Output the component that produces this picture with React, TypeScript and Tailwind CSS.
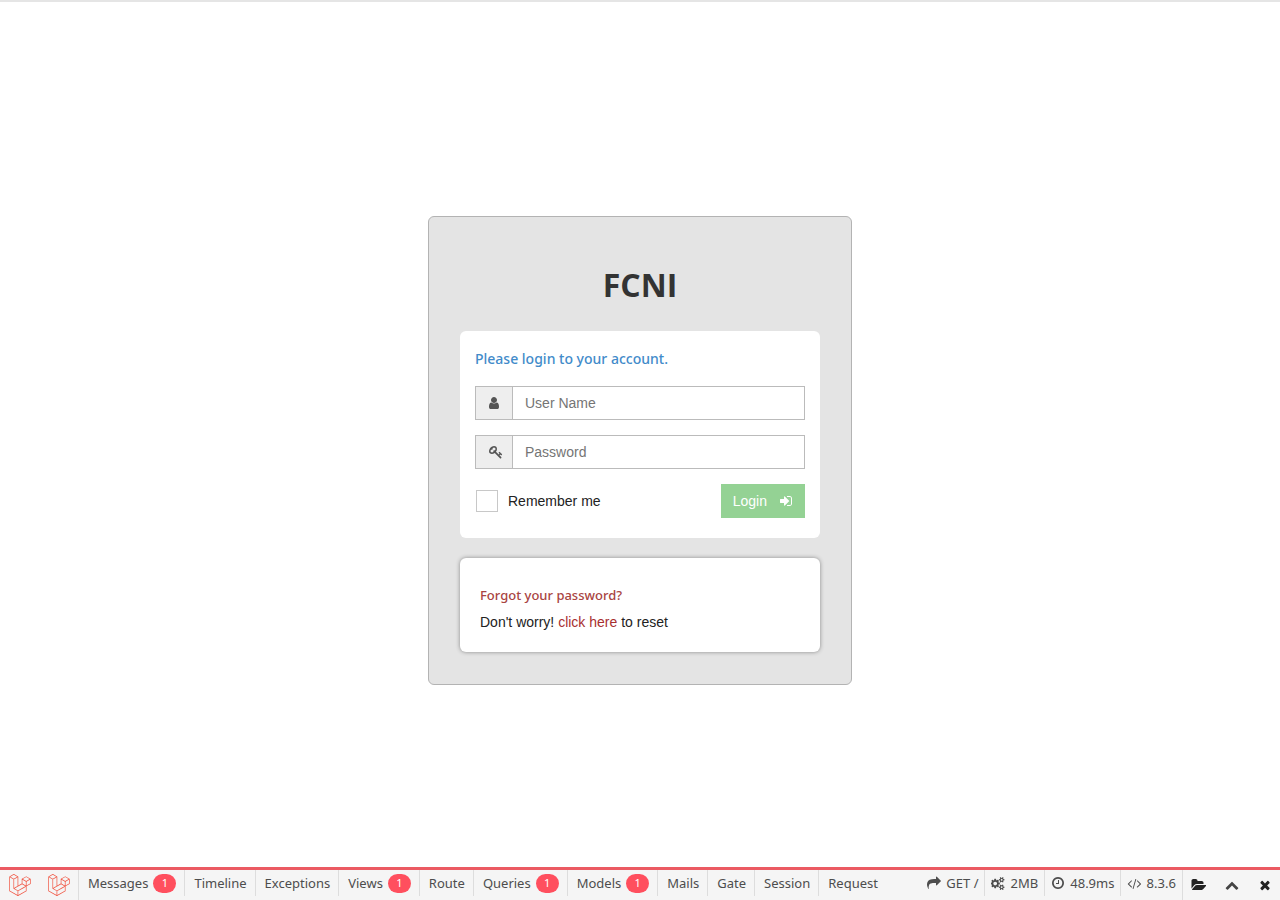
import { useState } from "react"
import type { ReactNode } from "react"
import { FaLaravel } from "react-icons/fa"

const smallCog = "v140q0 16-149 31-12 27-30 52 51 113 51 138 0 4-4 7-122 71-124 71-8 0-46-47t-52-68q-20 2-30 2t-30-2q-14 21-52 68t-46 47q-2 0-124-71-4-3-4-7 0-25 51-138-18-25-30-52-149-15-149-31v-140q0-16 149-31 13-29 30-52-51-113-51-138 0-4 4-7 4-2 35-20t59-34 30-16q8 0 46 46.5t52 67.5q20-2 30-2t30 2q51-71 92-112l6-2q4 0 124 70 4 3 4 7 0 25-51 138 17 23 30 52 149 15 149 31z";

const icons = {
    user: "M1536 1399q0 109-62.5 187t-150.5 78h-854q-88 0-150.5-78t-62.5-187q0-85 8.5-160.5t31.5-152 58.5-131 94-89 134.5-34.5q131 128 313 128t313-128q76 0 134.5 34.5t94 89 58.5 131 31.5 152 8.5 160.5zm-256-887q0 159-112.5 271.5t-271.5 112.5-271.5-112.5-112.5-271.5 112.5-271.5 271.5-112.5 271.5 112.5 112.5 271.5z",
    key: "M832 512q0-80-56-136t-136-56-136 56-56 136q0 42 19 83-41-19-83-19-80 0-136 56t-56 136 56 136 136 56 136-56 56-136q0-42-19-83 41 19 83 19 80 0 136-56t56-136zm851 704q0 17-49 66t-66 49q-9 0-28.5-16t-36.5-33-38.5-40-24.5-26l-96 96 220 220q28 28 28 68 0 42-39 81t-81 39q-40 0-68-28l-671-671q-176 131-365 131-163 0-265.5-102.5t-102.5-265.5q0-160 95-313t248-248 313-95q163 0 265.5 102.5t102.5 265.5q0 189-131 365l355 355 96-96q-3-3-26-24.5t-40-38.5-33-36.5-16-28.5q0-17 49-66t66-49q13 0 23 10 6 6 46 44.5t82 79.5 86.5 86 73 78 28.5 41z",
    signIn: "M1312 896q0 26-19 45l-544 544q-19 19-45 19t-45-19-19-45v-288h-448q-26 0-45-19t-19-45v-384q0-26 19-45t45-19h448v-288q0-26 19-45t45-19 45 19l544 544q19 19 19 45zm352-352v704q0 119-84.5 203.5t-203.5 84.5h-320q-13 0-22.5-9.5t-9.5-22.5q0-4-1-20t-.5-26.5 3-23.5 10-19.5 20.5-6.5h320q66 0 113-47t47-113v-704q0-66-47-113t-113-47h-312l-11.5-1-11.5-3-8-5.5-7-9-2-13.5q0-4-1-20t-.5-26.5 3-23.5 10-19.5 20.5-6.5h320q119 0 203.5 84.5t84.5 203.5z",
    share: "M1792 640q0 26-19 45l-512 512q-19 19-45 19t-45-19-19-45v-256h-224q-98 0-175.5 6t-154 21.5-133 42.5-105.5 69.5-80 101-48.5 138.5-17.5 181q0 55 5 123 0 6 2.5 23.5t2.5 26.5q0 15-8.5 25t-23.5 10q-16 0-28-17-7-9-13-22t-13.5-30-10.5-24q-127-285-127-451 0-199 53-333 162-403 875-403h224v-256q0-26 19-45t45-19 45 19l512 512q19 19 19 45z",
    cogs: "M832 896q0-106-75-181t-181-75-181 75-75 181 75 181 181 75 181-75 75-181zm768 512q0-52-38-90t-90-38-90 38-38 90q0 53 37.5 90.5t90.5 37.5 90.5-37.5 37.5-90.5zm0-1024q0-52-38-90t-90-38-90 38-38 90q0 53 37.5 90.5t90.5 37.5 90.5-37.5 37.5-90.5zm-384 421v185q0 10-7 19.5t-16 10.5l-155 24q-11 35-32 76 34 48 90 115 7 11 7 20 0 12-7 19-23 30-82.5 89.5t-78.5 59.5q-11 0-21-7l-115-90q-37 19-77 31-11 108-23 155-7 24-30 24h-186q-11 0-20-7.5t-10-17.5l-23-153q-34-10-75-31l-118 89q-7 7-20 7-11 0-21-8-144-133-144-160 0-9 7-19 10-14 41-53t47-61q-23-44-35-82l-152-24q-10-1-17-9.5t-7-19.5v-185q0-10 7-19.5t16-10.5l155-24q11-35 32-76-34-48-90-115-7-11-7-20 0-12 7-20 22-30 82-89t79-59q11 0 21 7l115 90q34-18 77-32 11-108 23-154 7-24 30-24h186q11 0 20 7.5t10 17.5l23 153q34 10 75 31l118-89q8-7 20-7 11 0 21 8 144 133 144 160 0 8-7 19-12 16-42 54t-45 60q23 48 34 82l152 23q10 2 17 10.5t7 19.5z" +
        "M1856 1338" + smallCog + "M1856 314" + smallCog,
    clock: "M1024 544v448q0 14-9 23t-23 9h-320q-14 0-23-9t-9-23v-64q0-14 9-23t23-9h224v-352q0-14 9-23t23-9h64q14 0 23 9t9 23zm416 352q0-148-73-273t-198-198-273-73-273 73-198 198-73 273 73 273 198 198 273 73 273-73 198-198 73-273zm224 0q0 209-103 385.5t-279.5 279.5-385.5 103-385.5-103-279.5-279.5-103-385.5 103-385.5 279.5-279.5 385.5-103 385.5 103 279.5 279.5 103 385.5z",
    code: "M681 1399l-50 50q-10 10-23 10t-23-10l-466-466q-10-10-10-23t10-23l466-466q10-10 23-10t23 10l50 50q10 10 10 23t-10 23l-393 393 393 393q10 10 10 23t-10 23zm591-1067l-373 1291q-4 13-15.5 19.5t-23.5 2.5l-62-17q-13-4-19.5-15.5t-2.5-24.5l373-1291q4-13 15.5-19.5t23.5-2.5l62 17q13 4 19.5 15.5t2.5 24.5zm657 651l-466 466q-10 10-23 10t-23-10l-50-50q-10-10-10-23t10-23l393-393-393-393q-10-10-10-23t10-23l50-50q10-10 23-10t23 10l466 466q10 10 10 23t-10 23z",
    folder: "M1943 952q0 31-31 66l-336 396q-43 51-120.5 86.5t-143.5 35.5h-1088q-34 0-60.5-13t-26.5-43q0-31 31-66l336-396q43-51 120.5-86.5t143.5-35.5h1088q34 0 60.5 13t26.5 43zm-343-344v160h-832q-94 0-197 47.5t-164 119.5l-337 396-5 6q0-4-.5-12.5t-.5-12.5v-960q0-92 66-158t158-66h320q92 0 158 66t66 158v32h544q92 0 158 66t66 158z",
    up: "M1683 1331l-166 165q-19 19-45 19t-45-19l-531-531-531 531q-19 19-45 19t-45-19l-166-165q-19-19-19-45.5t19-45.5l742-741q19-19 45-19t45 19l742 741q19 19 19 45.5t-19 45.5z",
    close: "M1490 1322q0 40-28 68l-136 136q-28 28-68 28t-68-28l-294-294-294 294q-28 28-68 28t-68-28l-136-136q-28-28-28-68t28-68l294-294-294-294q-28-28-28-68t28-68l136-136q28-28 68-28t68 28l294 294 294-294q28-28 68-28t68 28l136 136q28 28 28 68t-28 68l-294 294 294 294q28 28 28 68z",
};

function Icon({ name, wide, className = "h-3.5" }: { name: keyof typeof icons; wide?: boolean; className?: string }) {
    return (
        <svg viewBox={wide ? "0 0 1943 1792" : "0 0 1792 1792"} className={`shrink-0 ${className}`} fill="currentColor" aria-hidden="true">
            <path d={icons[name]} />
        </svg>
    )
}

const tabs = [
    { title: "Messages", count: 1 },
    { title: "Timeline" },
    { title: "Exceptions" },
    { title: "Views", count: 1 },
    { title: "Route" },
    { title: "Queries", count: 1 },
    { title: "Models", count: 1 },
    { title: "Mails" },
    { title: "Gate" },
    { title: "Session" },
    { title: "Request" },
];

function Indicator({ children, first }: { children: ReactNode; first?: boolean }) {
    return (
        <span className={`flex h-[26px] items-center gap-[5px] whitespace-nowrap px-1.5 ${first ? "" : "border-l border-[#dddddd]"}`}>
            {children}
        </span>
    )
}

function DebugBar() {
    return (
        <footer className="flex h-[33px] items-start border-t-3 border-[#eb5a62] bg-[#f5f5f5] font-['Noto_Sans',sans-serif] text-[13px] text-[#4d4d4d]">
            <div className="flex h-[30px] items-center gap-[17px] border-r border-[#dddddd] pr-2 pl-[9px] text-[#f05340]">
                <FaLaravel className="size-[22px]" />
                <FaLaravel className="size-[22px]" />
            </div>

            <nav className="flex">
                {tabs.map((tab, index) => (
                    <button
                        key={tab.title}
                        type="button"
                        className={`flex h-[26px] items-center pr-2 pl-[9px] ${index > 0 ? "border-l border-[#dddddd]" : ""}`}
                    >
                        {tab.title}
                        {tab.count && (
                            <span className="ml-[5px] flex h-[19px] w-[23px] items-center justify-center rounded-full bg-[#ff4f5e] text-[11px] text-white">
                                {tab.count}
                            </span>
                        )}
                    </button>
                ))}
            </nav>

            <div className="ml-auto flex">
                <Indicator first><Icon name="share" />GET /</Indicator>
                <Indicator><Icon name="cogs" wide className="h-[13px]" />2MB</Indicator>
                <Indicator><Icon name="clock" />48.9ms</Indicator>
                <Indicator><Icon name="code" wide className="h-[13px]" />8.3.6</Indicator>
                <div className="flex h-[30px] items-center gap-[19px] border-l border-[#dddddd] px-2 text-[#222222]">
                    <button type="button" aria-label="Open requests"><Icon name="folder" wide /></button>
                    <button type="button" aria-label="Restore bar"><Icon name="up" className="h-3.5 text-[#444444]" /></button>
                    <button type="button" aria-label="Close bar"><Icon name="close" /></button>
                </div>
            </div>
        </footer>
    )
}

export default function App() {
    const [userName, setUserName] = useState('');
    const [password, setPassword] = useState('');
    const [remember, setRemember] = useState(false);

    return (
        <div className="flex min-h-screen flex-col border-t-2 border-[#e5e5e5] bg-white font-['Liberation_Sans',Arial,sans-serif] text-sm text-[#222222]">
            <main className="flex flex-1 items-center justify-center pt-8">
                <div className="w-full max-w-[424px] rounded-md border border-[#b3b3b3] bg-[#e4e4e4] px-[31px] pt-12 pb-8">
                    <h1 className="text-center font-['Open_Sans',sans-serif] text-[32px] leading-10 font-bold text-[#333333]">
                        FCNI
                    </h1>

                    <form className="mt-[26px] rounded-md bg-white px-[15px] pt-[18px] pb-5" onSubmit={(e) => e.preventDefault()}>
                        <h2 className="mb-[17px] font-['Noto_Sans',sans-serif] text-sm leading-5 font-medium text-[#428bca]">
                            Please login to your account.
                        </h2>

                        <div className="mb-[15px] flex h-[34px] border border-[#bbbbbb]">
                            <label htmlFor="username" aria-label="User Name" className="flex w-[37px] items-center justify-center border-r border-[#bbbbbb] bg-[#eeeeee] text-[#555555]">
                                <Icon name="user" />
                            </label>
                            <input
                                id="username"
                                className="min-w-0 flex-1 px-3 outline-none placeholder:text-[#757575]"
                                placeholder="User Name"
                                value={userName}
                                onChange={(e) => setUserName(e.target.value)}
                            />
                        </div>

                        <div className="mb-[15px] flex h-[34px] border border-[#bbbbbb]">
                            <label htmlFor="password" aria-label="Password" className="flex w-[37px] items-center justify-center border-r border-[#bbbbbb] bg-[#eeeeee] pl-1 text-[#555555]">
                                <Icon name="key" />
                            </label>
                            <input
                                id="password"
                                type="password"
                                className="min-w-0 flex-1 px-3 outline-none placeholder:text-[#757575]"
                                placeholder="Password"
                                value={password}
                                onChange={(e) => setPassword(e.target.value)}
                            />
                        </div>

                        <div className="flex items-center justify-between">
                            <label className="flex items-center gap-2.5 pl-px">
                                <input
                                    type="checkbox"
                                    className="size-[22px] appearance-none border border-[#c8c8c8] bg-white checked:bg-[#428bca]"
                                    checked={remember}
                                    onChange={(e) => setRemember(e.target.checked)}
                                />
                                Remember me
                            </label>
                            <button type="submit" className="flex h-[34px] items-center gap-3 bg-[#94d294] px-3 text-white">
                                Login
                                <Icon name="signIn" />
                            </button>
                        </div>
                    </form>

                    <section className="mt-5 rounded-md bg-white px-5 pt-[27px] pb-5 shadow-[0_0_4px_#888888]">
                        <h3 className="mb-[7px] font-['Noto_Sans',sans-serif] text-[13px] leading-5 font-medium text-[#a94442]">
                            Forgot your password?
                        </h3>
                        <p className="leading-5">
                            Don't worry! <a href="#reset" className="text-[#a82f2f]">click here</a> to reset
                        </p>
                    </section>
                </div>
            </main>

            <DebugBar />
        </div>
    )
}
